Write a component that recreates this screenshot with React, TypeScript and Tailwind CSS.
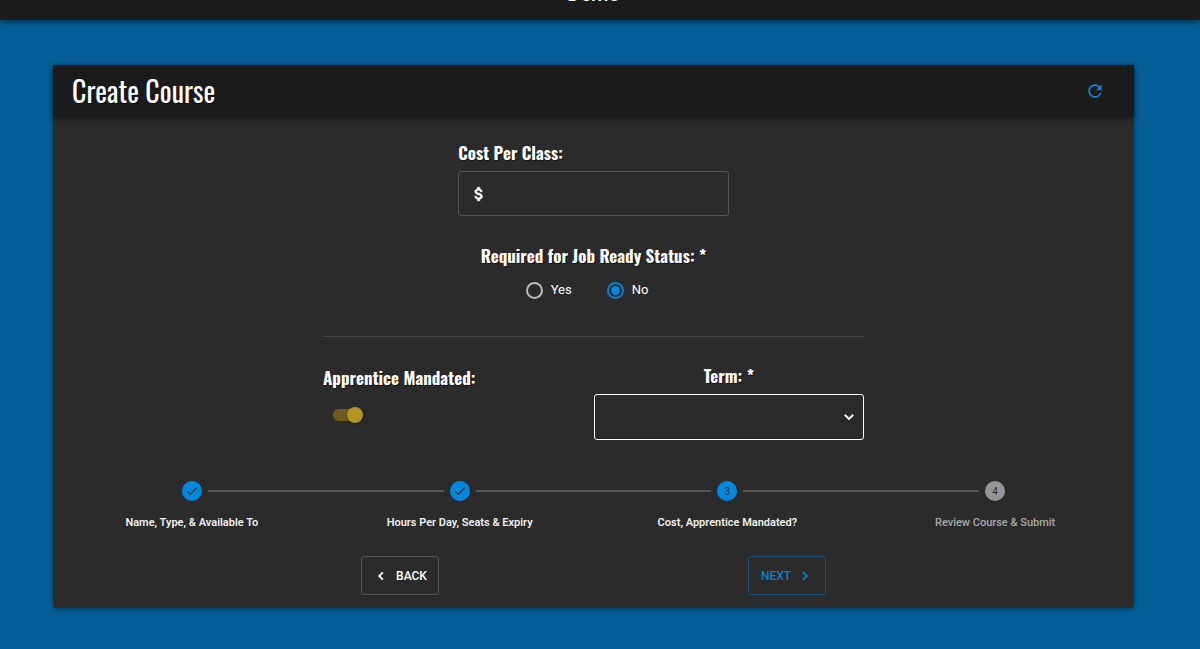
import { useState } from "react";
import { MdCheck, MdChevronLeft, MdChevronRight, MdRefresh, MdExpandMore, MdAttachMoney } from "react-icons/md";

const heading = "font-['Oswald','Liberation_Sans_Narrow',sans-serif] [text-shadow:1px_1px_1px_rgba(0,0,0,0.6)]";
const fieldLabel = "text-[17px] leading-6 font-bold text-white";
const boldIcon = "stroke-1 [&>path[fill=none]]:stroke-none";

const steps = [
  "Name, Type, & Available To",
  "Hours Per Day, Seats & Expiry",
  "Cost, Apprentice Mandated?",
  "Review Course & Submit",
];
const currentStep = 2;

function RadioOption({ label, checked, onSelect }: { label: string; checked: boolean; onSelect: () => void }) {
  return (
    <label className="flex items-center gap-2 text-[13px] leading-5 text-white">
      <input
        type="radio"
        name="job-ready"
        checked={checked}
        onChange={onSelect}
        className="grid size-[17px] appearance-none place-content-center rounded-full border-2 border-[#bababa] before:size-[9px] before:rounded-full checked:border-[#0d7fd0] checked:before:bg-[#0288e0]"
      />
      {label}
    </label>
  );
}

function Stepper() {
  return (
    <ol className="flex px-[5px]">
      {steps.map((step, i) => (
        <li key={step} className="flex-1">
          <div className="flex items-center gap-[6px]">
            <span className={`h-[2px] flex-1 ${i > 0 ? "bg-[#565656]" : ""}`} />
            <span
              className={`flex size-5 items-center justify-center rounded-full text-[10px] text-[#2b2b2b] ${
                i <= currentStep ? "bg-[#0288e0]" : "bg-[#959595]"
              }`}
            >
              {i < currentStep ? <MdCheck className="size-[14px]" /> : i + 1}
            </span>
            <span className={`h-[2px] flex-1 ${i < steps.length - 1 ? "bg-[#565656]" : ""}`} />
          </div>
          <p
            className={`mt-3 text-center text-[11px] leading-5 ${
              i <= currentStep ? "font-semibold text-[#f0f0f0]" : "font-medium text-[#a8a8a8]"
            }`}
          >
            {step}
          </p>
        </li>
      ))}
    </ol>
  );
}

export default function App() {
  const [required, setRequired] = useState(false);
  const [mandated, setMandated] = useState(true);

  return (
    <div className="min-h-screen overflow-hidden bg-[#055e97] font-['Roboto',sans-serif]">
      <header className="-mt-8 flex h-13 items-center justify-center bg-[#1b1b1b] pr-[13px] shadow-[0_2px_6px_rgba(0,0,0,0.5)]">
        <span className="text-xl font-medium text-white">Demo</span>
      </header>

      <main className="mt-[45px] mr-[66px] mb-10 ml-[53px] rounded-sm bg-[#2b2b2b] pb-[13px] shadow-[0_1px_5px_rgba(0,0,0,0.4)]">
        <div className="flex h-13 items-center justify-between bg-[#1b1b1b] pr-[29px] pl-[19px] shadow-[0_2px_5px_rgba(0,0,0,0.4)]">
          <h1 className={`${heading} text-[28px] leading-10 text-white`}>Create Course</h1>
          <button type="button" aria-label="Reset form" className="text-[#0d84d8]">
            <MdRefresh className="size-5" />
          </button>
        </div>

        <form className="mx-auto flex w-full max-w-[541px] flex-col items-center pt-6">
          <div className="w-1/2">
            <label htmlFor="cost" className={`${heading} ${fieldLabel} block`}>
              Cost Per Class:
            </label>
            <div className="mt-[6px] flex h-[45px] items-center rounded-[3px] border border-[#555] px-[11px]">
              <MdAttachMoney className={`size-[18px] text-white ${boldIcon}`} />
              <input id="cost" type="text" className="min-w-0 flex-1 bg-transparent px-2 text-sm text-white outline-none" />
            </div>
          </div>

          <fieldset className="mt-7">
            <legend className={`${heading} ${fieldLabel}`}>Required for Job Ready Status: *</legend>
            <div className="mt-3 flex justify-center gap-[35px] pr-[13px]">
              <RadioOption label="Yes" checked={required} onSelect={() => setRequired(true)} />
              <RadioOption label="No" checked={!required} onSelect={() => setRequired(false)} />
            </div>
          </fieldset>

          <hr className="mt-9 w-full border-[#474747]" />

          <div className="mt-[27px] grid w-full grid-cols-2">
            <div>
              <label htmlFor="mandated" className={`${heading} ${fieldLabel} block pt-[2px]`}>
                Apprentice Mandated:
              </label>
              <input
                id="mandated"
                type="checkbox"
                role="switch"
                checked={mandated}
                onChange={(e) => setMandated(e.target.checked)}
                className="mt-[19px] ml-[10px] flex h-3 w-[30px] appearance-none items-center rounded-full bg-[#555] before:size-4 before:rounded-full before:bg-[#bbb] before:shadow-[0_1px_2px_rgba(0,0,0,0.5)] checked:justify-end checked:bg-[#6e5c1d] checked:before:bg-[#b39420]"
              />
            </div>
            <div>
              <label htmlFor="term" className={`${heading} ${fieldLabel} block text-center`}>
                Term: *
              </label>
              <div className="mt-[6px] grid items-center">
                <select
                  id="term"
                  className="col-start-1 row-start-1 h-[46px] w-full appearance-none rounded-[3px] border border-white bg-transparent px-3 text-sm text-white outline-none"
                >
                  <option value=""></option>
                </select>
                <MdExpandMore
                  className={`pointer-events-none col-start-1 row-start-1 mr-[6px] size-[18px] justify-self-end text-white ${boldIcon}`}
                />
              </div>
            </div>
          </div>
        </form>

        <div className="mt-[41px]">
          <Stepper />
        </div>

        <div className="mx-auto mt-[23px] grid max-w-[774px] grid-cols-2 justify-items-center text-xs font-medium">
          <button
            type="button"
            className="flex h-[39px] w-[78px] items-center justify-center gap-[7px] rounded-[3px] border border-[#555] text-white"
          >
            <MdChevronLeft className={`size-4 ${boldIcon}`} />
            BACK
          </button>
          <button
            type="button"
            className="flex h-[39px] w-[78px] items-center justify-center gap-[6px] rounded-[3px] border border-[#1d4f78] text-[#0d80d0]"
          >
            NEXT
            <MdChevronRight className={`size-4 ${boldIcon}`} />
          </button>
        </div>
      </main>
    </div>
  );
}
